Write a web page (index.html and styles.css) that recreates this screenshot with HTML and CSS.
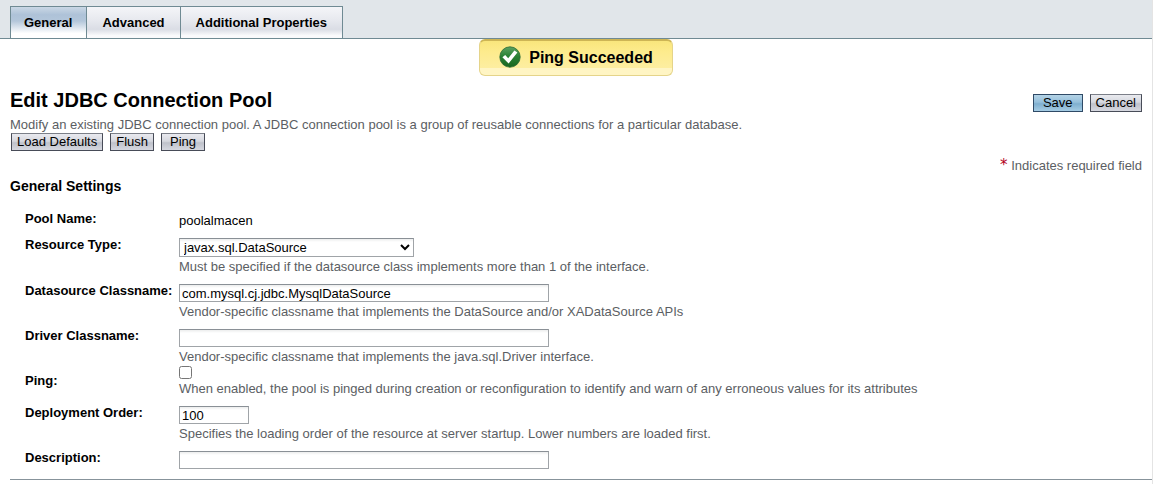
FILE: index.html
```html
<!DOCTYPE html>
<html lang="en">
<head>
<meta charset="utf-8">
<title>Edit JDBC Connection Pool</title>
<link rel="stylesheet" href="styles.css">
</head>
<body>
<nav class="tabs">
  <a class="tab tab-active" href="#general" aria-current="page">General</a>
  <a class="tab" href="#advanced">Advanced</a>
  <a class="tab" href="#properties">Additional Properties</a>
</nav>
<main>
  <div class="alert" role="status">
    <svg class="alert-icon" viewBox="0 0 22 22" aria-hidden="true">
      <defs>
        <linearGradient id="disc" x1="0" y1="0" x2="0" y2="1">
          <stop offset="0" stop-color="#5da363"/>
          <stop offset="0.45" stop-color="#2a8235"/>
          <stop offset="1" stop-color="#17661f"/>
        </linearGradient>
      </defs>
      <circle cx="11" cy="11" r="10.2" fill="url(#disc)" stroke="#2b6a34" stroke-width="0.8"/>
      <path d="M3.4 11.2 L6.2 8.9 L9.2 12.2 L15.4 4.6 L18.4 6.4 L9.6 17.4 Z" fill="#fff"/>
    </svg>
    <span>Ping Succeeded</span>
  </div>
  <form class="page">
    <div class="title-row">
      <h1>Edit JDBC Connection Pool</h1>
      <div class="buttons">
        <button type="submit" class="btn btn-primary">Save</button>
        <button type="button" class="btn">Cancel</button>
      </div>
    </div>
    <p class="help">Modify an existing JDBC connection pool. A JDBC connection pool is a group of reusable connections for a particular database.</p>
    <div class="buttons tools">
      <button type="button" class="btn">Load Defaults</button>
      <button type="button" class="btn">Flush</button>
      <button type="button" class="btn btn-wide">Ping</button>
    </div>
    <p class="required"><span class="star">*</span> Indicates required field</p>
    <h2>General Settings</h2>
    <div class="fields">
      <div class="row">
        <span class="label">Pool Name:</span>
        <div class="value">poolalmacen</div>
      </div>
      <div class="row">
        <label class="label" for="type">Resource Type:</label>
        <div>
          <select id="type" class="control select"><option>javax.sql.DataSource</option></select>
          <p class="hint">Must be specified if the datasource class implements more than 1 of the interface.</p>
        </div>
      </div>
      <div class="row">
        <label class="label" for="datasource">Datasource Classname:</label>
        <div>
          <input id="datasource" class="control" type="text" value="com.mysql.cj.jdbc.MysqlDataSource">
          <p class="hint">Vendor-specific classname that implements the DataSource and/or XADataSource APIs</p>
        </div>
      </div>
      <div class="row">
        <label class="label" for="driver">Driver Classname:</label>
        <div>
          <input id="driver" class="control" type="text">
          <p class="hint">Vendor-specific classname that implements the java.sql.Driver interface.</p>
        </div>
      </div>
      <div class="row row-check">
        <label class="label" for="ping">Ping:</label>
        <div>
          <input id="ping" class="check" type="checkbox">
          <p class="hint">When enabled, the pool is pinged during creation or reconfiguration to identify and warn of any erroneous values for its attributes</p>
        </div>
      </div>
      <div class="row">
        <label class="label" for="order">Deployment Order:</label>
        <div>
          <input id="order" class="control short" type="text" value="100">
          <p class="hint">Specifies the loading order of the resource at server startup. Lower numbers are loaded first.</p>
        </div>
      </div>
      <div class="row">
        <label class="label" for="description">Description:</label>
        <div><input id="description" class="control" type="text"></div>
      </div>
    </div>
  </form>
</main>
</body>
</html>
```
FILE: styles.css
```css
* {
  box-sizing: border-box;
}

body {
  margin: 0;
  border-right: 1px solid #e4e4e4;
  min-height: 100vh;
  background: #fff;
  color: #000;
  font: 13px/17px "Liberation Sans", Arial, Helvetica, sans-serif;
}

h1, h2, p {
  margin: 0;
}

.tabs {
  display: flex;
  padding: 6px 10px 0;
  background: #e1e6ea;
  border-bottom: 1px solid #6f8a93;
}

.tab {
  padding: 0 15px;
  border: 1px solid #6f8a93;
  border-width: 1px 1px 0 0;
  background: linear-gradient(#f4f5f8, #e6e8ee 45%, #dadde5 72%, #fafafc 92%);
  color: #000;
  font-weight: bold;
  line-height: 31px;
  text-decoration: none;
}

.tab-active {
  padding: 0 14px 0 13px;
  border-left-width: 1px;
  background: linear-gradient(#cad8e5, #aec2d8 25%, #b3c6da 45%, #fff 85%);
}

.alert {
  display: flex;
  align-items: center;
  gap: 8px;
  width: fit-content;
  height: 37px;
  margin: 0 auto;
  padding: 0 19px 2px;
  border: 1px solid #e5d48a;
  border-top: 2px solid #cdb555;
  border-radius: 6px;
  background: linear-gradient(#f9e67c, #fdeb8c 30%, #fdeea0 78%, #fff5c4 79%);
  font-size: 16px;
  font-weight: bold;
}

.alert-icon {
  width: 22px;
  height: 22px;
}

.page {
  margin: 12px 0 0 10px;
  padding-bottom: 10px;
  border-bottom: 1px solid #87939b;
}

.title-row {
  display: flex;
  justify-content: space-between;
  align-items: flex-end;
  padding-right: 10px;
}

h1 {
  font-size: 20px;
  line-height: 24px;
}

.help, .hint, .required {
  color: #5b5e63;
}

.help {
  padding-top: 4px;
}

.hint {
  padding-top: 1px;
}

.buttons {
  display: flex;
  gap: 7px;
}

.tools {
  padding-left: 1px;
}

.btn {
  height: 18px;
  padding: 0 5px;
  border: 1px solid #484c58;
  border-top-color: #7b7f88;
  border-radius: 0;
  background: linear-gradient(#e9eaef, #d6d8df 45%, #bfc2cb 55%, #d6d8e0);
  color: #000;
  font: inherit;
  line-height: 16px;
}

.btn-primary {
  padding: 0 9px;
  border-color: #2f4a66;
  background: linear-gradient(#b4d3e6, #95bfdb 45%, #7fafcf 55%, #a5cce4);
}

.btn-wide {
  padding: 0 8px;
}

.required {
  padding: 6px 10px 0 0;
  text-align: right;
}

.star {
  color: #b3001b;
  font: 15px/16px "DejaVu Sans", sans-serif;
}

h2 {
  padding-top: 3px;
  font-size: 14px;
  line-height: 18px;
}

.fields {
  display: grid;
  gap: 9px;
  padding: 17px 0 0 15px;
}

.row {
  display: grid;
  grid-template-columns: 154px 1fr;
}

.label {
  align-self: start;
  font-size: 13px;
  font-weight: bold;
  line-height: 14px;
}

.control {
  display: block;
  width: 370px;
  height: 18px;
  padding: 0 2px;
  border: 1px solid #a0a4a8;
  border-top-color: #8a9096;
  border-radius: 0;
  background: linear-gradient(#eceded, #fff 3px);
  color: #000;
  font: inherit;
}

.select {
  width: 235px;
  height: 19px;
  padding: 0;
}

.short {
  width: 70px;
}

.check {
  display: block;
  width: 13px;
  height: 13px;
  margin: 0;
}

.row-check {
  margin-top: -8px;
}

.row-check .label {
  padding-top: 8px;
}
```
